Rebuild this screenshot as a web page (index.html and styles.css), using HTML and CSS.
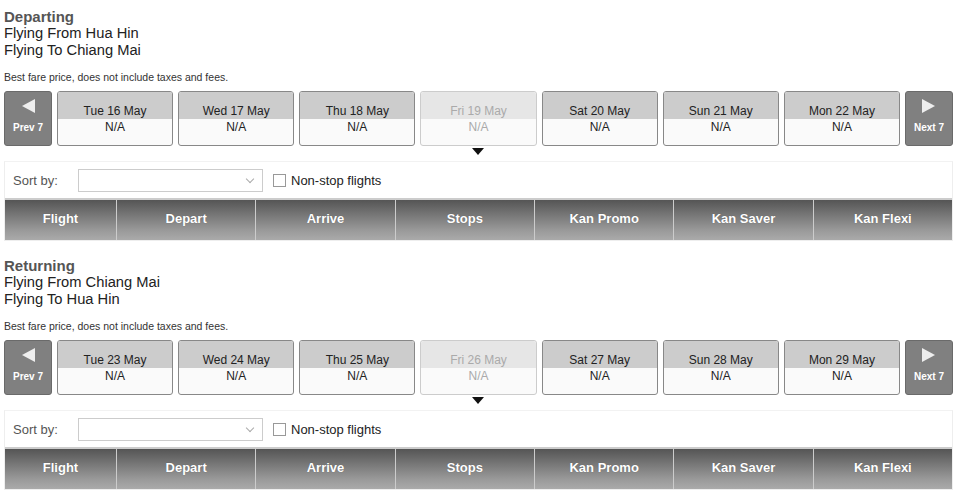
FILE: index.html
```html
<!DOCTYPE html>
<html lang="en">
<head>
  <meta charset="UTF-8">
  <title>Select Flights</title>
  <link rel="stylesheet" href="styles.css">
</head>
<body>

  <div class="leg">
    <div class="leg-title">Departing</div>
    <div class="route">Flying From Hua Hin</div>
    <div class="route">Flying To Chiang Mai</div>
    <div class="note">Best fare price, does not include taxes and fees.</div>

    <div class="dates">
      <div class="nav prev"><span class="arrow"></span>Prev 7</div>
      <div class="day"><div class="day-name">Tue 16 May</div><div class="fare">N/A</div></div>
      <div class="day"><div class="day-name">Wed 17 May</div><div class="fare">N/A</div></div>
      <div class="day"><div class="day-name">Thu 18 May</div><div class="fare">N/A</div></div>
      <div class="day selected"><div class="day-name">Fri 19 May</div><div class="fare">N/A</div></div>
      <div class="day"><div class="day-name">Sat 20 May</div><div class="fare">N/A</div></div>
      <div class="day"><div class="day-name">Sun 21 May</div><div class="fare">N/A</div></div>
      <div class="day"><div class="day-name">Mon 22 May</div><div class="fare">N/A</div></div>
      <div class="nav next"><span class="arrow"></span>Next 7</div>
    </div>

    <div class="results">
      <div class="sort-bar">
        <span class="sort-label">Sort by:</span>
        <div class="select"><span class="chevron"></span></div>
        <label class="nonstop"><span class="check"></span>Non-stop flights</label>
      </div>
      <div class="table-head">
        <div>Flight</div>
        <div>Depart</div>
        <div>Arrive</div>
        <div>Stops</div>
        <div>Kan Promo</div>
        <div>Kan Saver</div>
        <div>Kan Flexi</div>
      </div>
    </div>
  </div>

  <div class="leg">
    <div class="leg-title">Returning</div>
    <div class="route">Flying From Chiang Mai</div>
    <div class="route">Flying To Hua Hin</div>
    <div class="note">Best fare price, does not include taxes and fees.</div>

    <div class="dates">
      <div class="nav prev"><span class="arrow"></span>Prev 7</div>
      <div class="day"><div class="day-name">Tue 23 May</div><div class="fare">N/A</div></div>
      <div class="day"><div class="day-name">Wed 24 May</div><div class="fare">N/A</div></div>
      <div class="day"><div class="day-name">Thu 25 May</div><div class="fare">N/A</div></div>
      <div class="day selected"><div class="day-name">Fri 26 May</div><div class="fare">N/A</div></div>
      <div class="day"><div class="day-name">Sat 27 May</div><div class="fare">N/A</div></div>
      <div class="day"><div class="day-name">Sun 28 May</div><div class="fare">N/A</div></div>
      <div class="day"><div class="day-name">Mon 29 May</div><div class="fare">N/A</div></div>
      <div class="nav next"><span class="arrow"></span>Next 7</div>
    </div>

    <div class="results">
      <div class="sort-bar">
        <span class="sort-label">Sort by:</span>
        <div class="select"><span class="chevron"></span></div>
        <label class="nonstop"><span class="check"></span>Non-stop flights</label>
      </div>
      <div class="table-head">
        <div>Flight</div>
        <div>Depart</div>
        <div>Arrive</div>
        <div>Stops</div>
        <div>Kan Promo</div>
        <div>Kan Saver</div>
        <div>Kan Flexi</div>
      </div>
    </div>
  </div>

</body>
</html>
```

FILE: styles.css
```css
body {
  font-family: "Liberation Sans", Arial, sans-serif;
  background: #fff;
  color: #222;
  margin: 0;
  padding: 8px 2px 0 4px;
}

.leg {
  margin-bottom: 16px;
}

.leg-title {
  font-size: 15px;
  line-height: 17px;
  font-weight: bold;
  color: #555;
}

.route {
  font-size: 14.7px;
  line-height: 17px;
  color: #222;
}

.note {
  font-size: 10.5px;
  line-height: 11px;
  margin: 13px 0 8px;
  color: #333;
}

/* date strip */
.dates {
  display: flex;
  gap: 5px;
  height: 55px;
}

.nav {
  flex: none;
  width: 48px;
  box-sizing: border-box;
  background: #808080;
  border: 1px solid #6a6a6a;
  border-radius: 3px;
  color: #fff;
  font-size: 10px;
  font-weight: bold;
  text-align: center;
  display: flex;
  flex-direction: column;
  align-items: center;
  padding-top: 7px;
}

.nav .arrow {
  width: 0;
  height: 0;
  border-top: 7px solid transparent;
  border-bottom: 7px solid transparent;
  margin-bottom: 9px;
}

.prev .arrow {
  border-right: 13px solid #eee;
}

.next .arrow {
  border-left: 13px solid #eee;
}

.day {
  flex: 1;
  box-sizing: border-box;
  border: 1px solid #888;
  border-radius: 3px;
  background: #fafafa;
  overflow: hidden;
  text-align: center;
  font-size: 12px;
  position: relative;
}

.day-name {
  background: #ccc;
  height: 27px;
  box-sizing: border-box;
  padding-top: 12px;
  line-height: 14px;
}

.fare {
  line-height: 14px;
  padding-top: 1px;
}

.day.selected {
  border-color: #ccc;
  color: #aaa;
  overflow: visible;
}

.day.selected .day-name {
  background: #e6e6e6;
  border-radius: 3px 3px 0 0;
}

.day.selected::after {
  content: "";
  position: absolute;
  left: 50%;
  top: calc(100% + 3px);
  margin-left: -6px;
  border-left: 6px solid transparent;
  border-right: 6px solid transparent;
  border-top: 7px solid #111;
}

/* results */
.results {
  margin-top: 15px;
  border: 1px solid #eee;
  border-top-color: #f2f2f2;
}

.sort-bar {
  display: flex;
  align-items: center;
  height: 36px;
  padding-left: 8px;
  background: #fff;
}

.sort-label {
  font-size: 13px;
  color: #555;
  width: 65px;
}

.select {
  width: 185px;
  height: 23px;
  box-sizing: border-box;
  border: 1px solid #ccc;
  background: #fff;
  position: relative;
  margin-right: 10px;
}

.chevron {
  position: absolute;
  right: 9px;
  top: 6px;
  width: 5px;
  height: 5px;
  border-right: 1px solid #aaa;
  border-bottom: 1px solid #aaa;
  transform: rotate(45deg);
}

.nonstop {
  display: flex;
  align-items: center;
  font-size: 13px;
  color: #222;
}

.check {
  width: 13px;
  height: 13px;
  box-sizing: border-box;
  border: 1px solid #999;
  background: #fff;
  margin-right: 5px;
}

.table-head {
  display: grid;
  grid-template-columns: 111px repeat(6, 1fr);
  height: 40px;
  background: linear-gradient(#555, #999 75%, #aaa);
  border-top: 2px solid #ccc;
}

.table-head div {
  display: flex;
  align-items: center;
  justify-content: center;
  padding-bottom: 3px;
  color: #fff;
  font-size: 13px;
  font-weight: bold;
  border-left: 1px solid #ccc;
  text-shadow: 0 0 1px rgba(0, 0, 0, 0.3);
}

.table-head div:first-child {
  border-left: none;
}
```
